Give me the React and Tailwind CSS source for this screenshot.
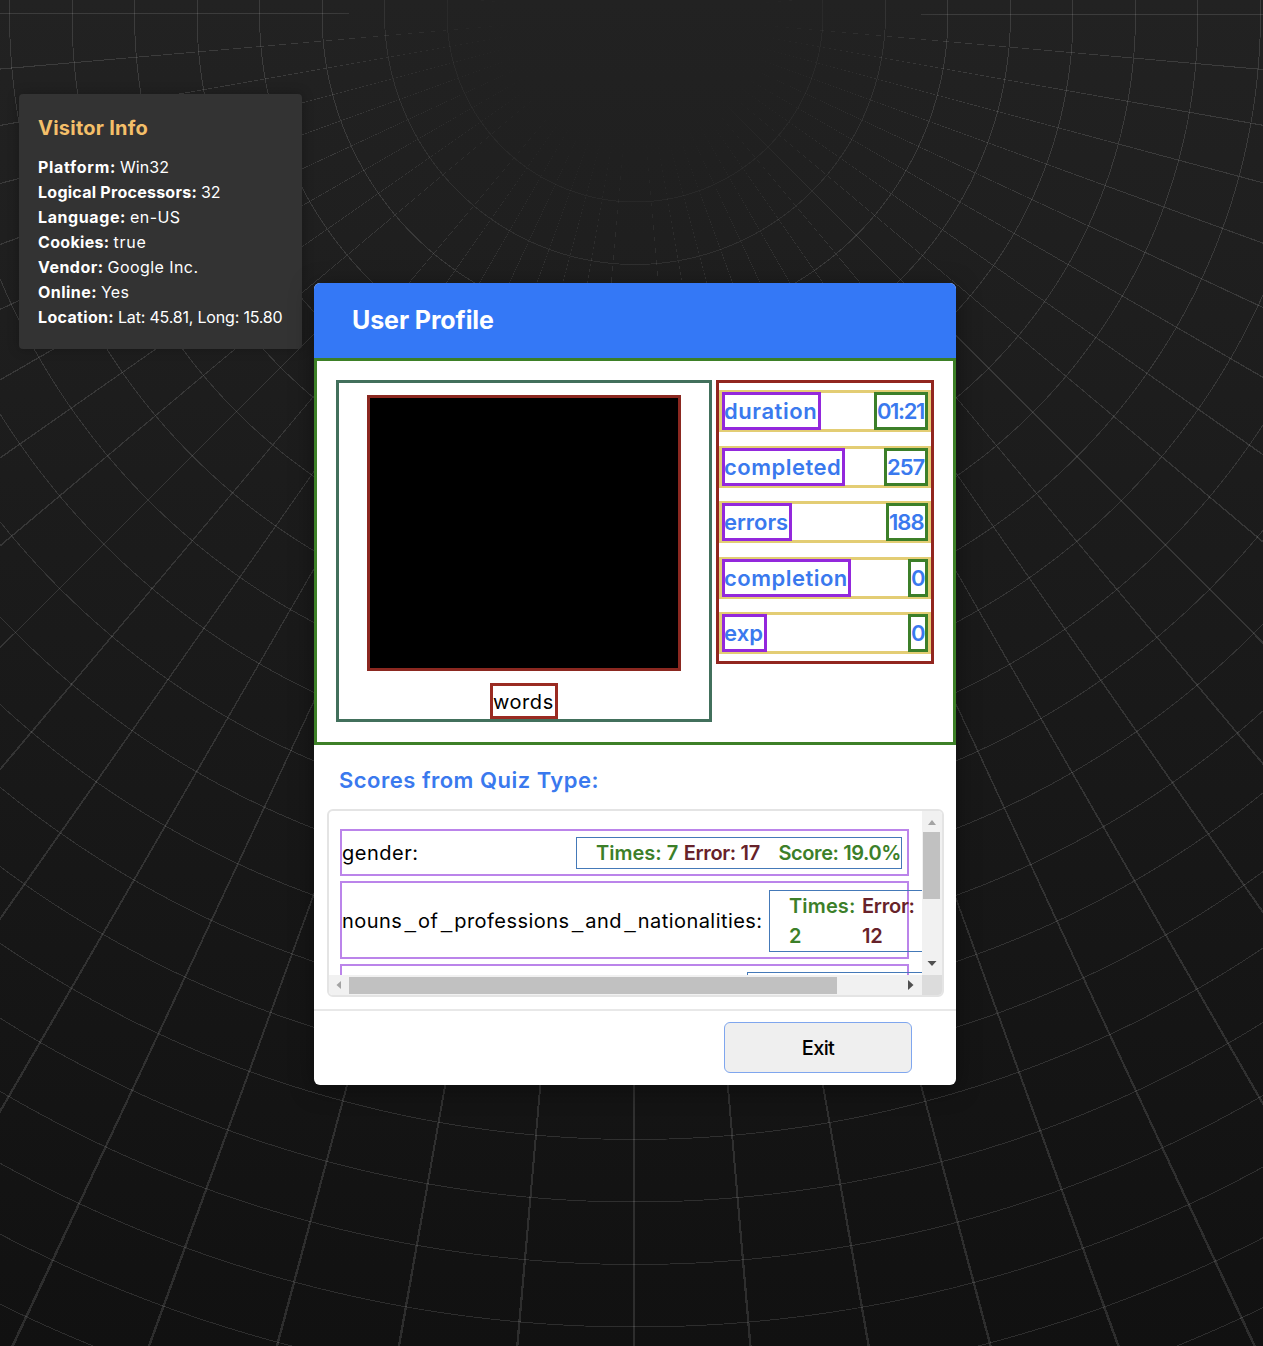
import React from "react";

const visitor = [
  ["Platform:", "tracking-[0.69px]", "Win32", "tracking-[0.05px]"],
  ["Logical Processors:", "tracking-[0.26px]", "32", "tracking-[-0.3px]"],
  ["Language:", "tracking-[0.6px]", "en-US", "tracking-[0.44px]"],
  ["Cookies:", "tracking-[0.32px]", "true", "tracking-[0.74px]"],
  ["Vendor:", "tracking-[0.47px]", "Google Inc.", "tracking-[0.44px]"],
  ["Online:", "tracking-[0.46px]", "Yes", "tracking-[0.2px]"],
  ["Location:", "tracking-[0.33px]", "Lat: 45.81, Long: 15.80", "tracking-[-0.19px]"],
];

const stats = [
  ["duration", "w-[99px] tracking-[0.55px]", "01:21", "w-[54px] tracking-[-1.4px]"],
  ["completed", "w-[123px] tracking-[0.5px]", "257", "w-[44px] tracking-[-1px]"],
  ["errors", "w-[70px] tracking-[-0.05px]", "188", "w-[42px] tracking-[-1px]"],
  ["completion", "w-[129px] tracking-[0.48px]", "0", "w-[20px] tracking-[-1.2px]"],
  ["exp", "w-[45px] tracking-[0.1px]", "0", "w-[20px] tracking-[-1.2px]"],
];

function Backdrop() {
  return (
    <div className="h-[1346px] w-full [grid-area:1/1] bg-[linear-gradient(#222222,#111111)]">
      <div className="h-full w-full [mask-image:radial-gradient(circle_at_635px_14px,transparent_120px,black_320px)] bg-[repeating-radial-gradient(circle_at_635px_14px,rgba(255,255,255,0.12)_0px,rgba(255,255,255,0.12)_0.9px,transparent_1px,transparent_62.5px),repeating-conic-gradient(from_0deg_at_635px_14px,rgba(255,255,255,0.12)_0deg,rgba(255,255,255,0.12)_0.1deg,transparent_0.1deg,transparent_5deg)]" />
    </div>
  );
}

function VisitorInfo() {
  return (
    <aside className="z-10 [grid-area:1/1] mt-[94px] ml-[19px] h-[255px] w-[283px] rounded bg-[#333333] px-[19px] pt-[19px] text-white shadow-[0_0_12px_rgba(0,0,0,0.25)]">
      <h2 className="mb-[12px] text-[20px] leading-[30px] font-bold tracking-[0.24px] text-[#f4bf69]">Visitor Info</h2>
      {visitor.map(([label, lc, value, vc]) => (
        <p key={label} className="flex gap-1 text-[16px] leading-[25px] whitespace-nowrap">
          <strong className={lc}>{label}</strong>
          <span className={vc}>{value}</span>
        </p>
      ))}
    </aside>
  );
}

function Stat({ row }) {
  const [label, lc, value, vc] = row;
  return (
    <div className="flex h-[42px] justify-between border-[3px] border-[#e3cd74] text-[22px] leading-[33px] font-semibold text-[#3a79ee]">
      <span className={`-my-px h-[38px] border-[3px] border-[#9328dc] -indent-px ${lc}`}>{label}</span>
      <span className={`-my-px h-[38px] border-[3px] border-[#3c7f29] ${vc}`}>{value}</span>
    </div>
  );
}

function Arrow({ d, dim }) {
  return (
    <svg viewBox="0 0 10 10" className={dim ? "size-[10px] fill-[#a3a3a3]" : "size-[10px] fill-[#505050]"}>
      <path d={d} />
    </svg>
  );
}

function Underscore() {
  return <span className="ml-[2.6px] font-['Liberation_Sans'] tracking-[2.1px]">_</span>;
}

function Scores() {
  return (
    <div className="ml-[13px] grid h-[188px] w-[617px] grid-cols-[593px_20px] grid-rows-[164px_20px] overflow-hidden rounded-md border-2 border-[#e4e4e4] text-[20px]">
      <div className="overflow-hidden pt-[18px] pl-[11px] whitespace-nowrap">
        <div className="mb-[5px] flex h-[47px] w-[569px] items-center justify-between border-2 border-[#bb84ea] pr-[5px]">
          <span className="tracking-[0.5px]">gender:</span>
          <span className="flex h-[32px] w-[326px] items-center border border-[#4479b8] pl-[19px] font-semibold text-[#3c7f29]">
            <span className="w-[88px] tracking-[0px]">Times: 7</span>
            <span className="w-[95px] tracking-[-0.35px] text-[#67222a]">Error: 17</span>
            <span className="tracking-[-0.4px]">Score: 19.0%</span>
          </span>
        </div>
        <div className="mb-[5px] flex h-[78px] w-[569px] items-center border-2 border-[#bb84ea] pt-px">
          <span className="w-[427px] shrink-0 tracking-[0.45px]">
            nouns<Underscore />of<Underscore />professions<Underscore />and<Underscore />nationalities:
          </span>
          <span className="flex h-[62px] w-[326px] shrink-0 border border-[#4479b8] pl-[19px] leading-[30px] font-semibold text-[#3c7f29]">
            <span className="w-[73px] tracking-[0.15px]">Times:<br />2</span>
            <span className="tracking-[-0.25px] text-[#67222a]">Error:<br />12</span>
          </span>
        </div>
        <div className="flex h-[78px] w-[569px] border-2 border-[#bb84ea] pt-[6px] pl-[405px]">
          <span className="h-[62px] w-[326px] shrink-0 border border-[#4479b8]" />
        </div>
      </div>
      <div className="flex flex-col items-center justify-between bg-[#f1f1f1] pt-[6px] pb-[7px]">
        <Arrow dim d="M1 8 5 3l4 5z" />
        <div className="mt-[5px] mr-[2px] mb-auto h-[67px] w-[17px] bg-[#c1c1c1]" />
        <Arrow d="M0.500 3h9L5 8z" />
      </div>
      <div className="flex items-center bg-[#f1f1f1] pr-[7px] pl-[5px]">
        <Arrow dim d="M7 1 2.500 5 7 9z" />
        <div className="mr-auto ml-[5px] h-[17px] w-[488px] bg-[#c1c1c1]" />
        <Arrow d="M3 0 8.500 5 3 10z" />
      </div>
      <div className="bg-[#dcdcdc]" />
    </div>
  );
}

export default function App() {
  return (
    <main className="grid h-[1346px] w-full grid-cols-1 grid-rows-1 items-start overflow-hidden bg-[#111111] font-['Inter',sans-serif] text-black">
      <Backdrop />
      <VisitorInfo />
      <section className="z-20 [grid-area:1/1] mt-[283px] ml-[314px] h-[802px] w-[642px] overflow-hidden rounded-md bg-white shadow-[0_4px_24px_rgba(0,0,0,0.4)]">
        <header className="flex h-[75px] items-center bg-[#3478f6] pl-[38px] text-[25px] font-bold tracking-[-0.1px] text-white">User Profile</header>
        <div className="flex h-[387px] items-start gap-1 border-[3px] border-[#3d8027] pt-[19px] pl-[19px]">
          <div className="flex h-[342px] w-[376px] flex-col items-center justify-between border-[3px] border-[#42705c] pt-[12px]">
            <div className="h-[276px] w-[314px] border-[3px] border-[#8b2820] bg-black" />
            <div className="h-[36px] w-[68px] border-[3px] border-[#9a2b22] text-[20px] leading-[32px] tracking-[0.55px]">words</div>
          </div>
          <div className="flex h-[284px] w-[218px] flex-col gap-[13.6px] border-[3px] border-[#92261f] pt-[7px]">
            {stats.map((row) => <Stat key={row[0]} row={row} />)}
          </div>
        </div>
        <h3 className="h-[64px] pt-[20px] pl-[25px] text-[22px] leading-[30px] font-semibold tracking-[0.5px] text-[#3a79ee]">Scores from Quiz Type:</h3>
        <Scores />
        <footer className="mt-[12px] flex h-[76px] justify-end border-t-2 border-[#e8e8e8] pt-[11px] pr-[44px]">
          <button className="h-[51px] w-[188px] rounded-md border-[1.5px] border-[#7fa6ee] bg-[#efefef] text-[20px] font-medium tracking-[-0.6px]">Exit</button>
        </footer>
      </section>
    </main>
  );
}
